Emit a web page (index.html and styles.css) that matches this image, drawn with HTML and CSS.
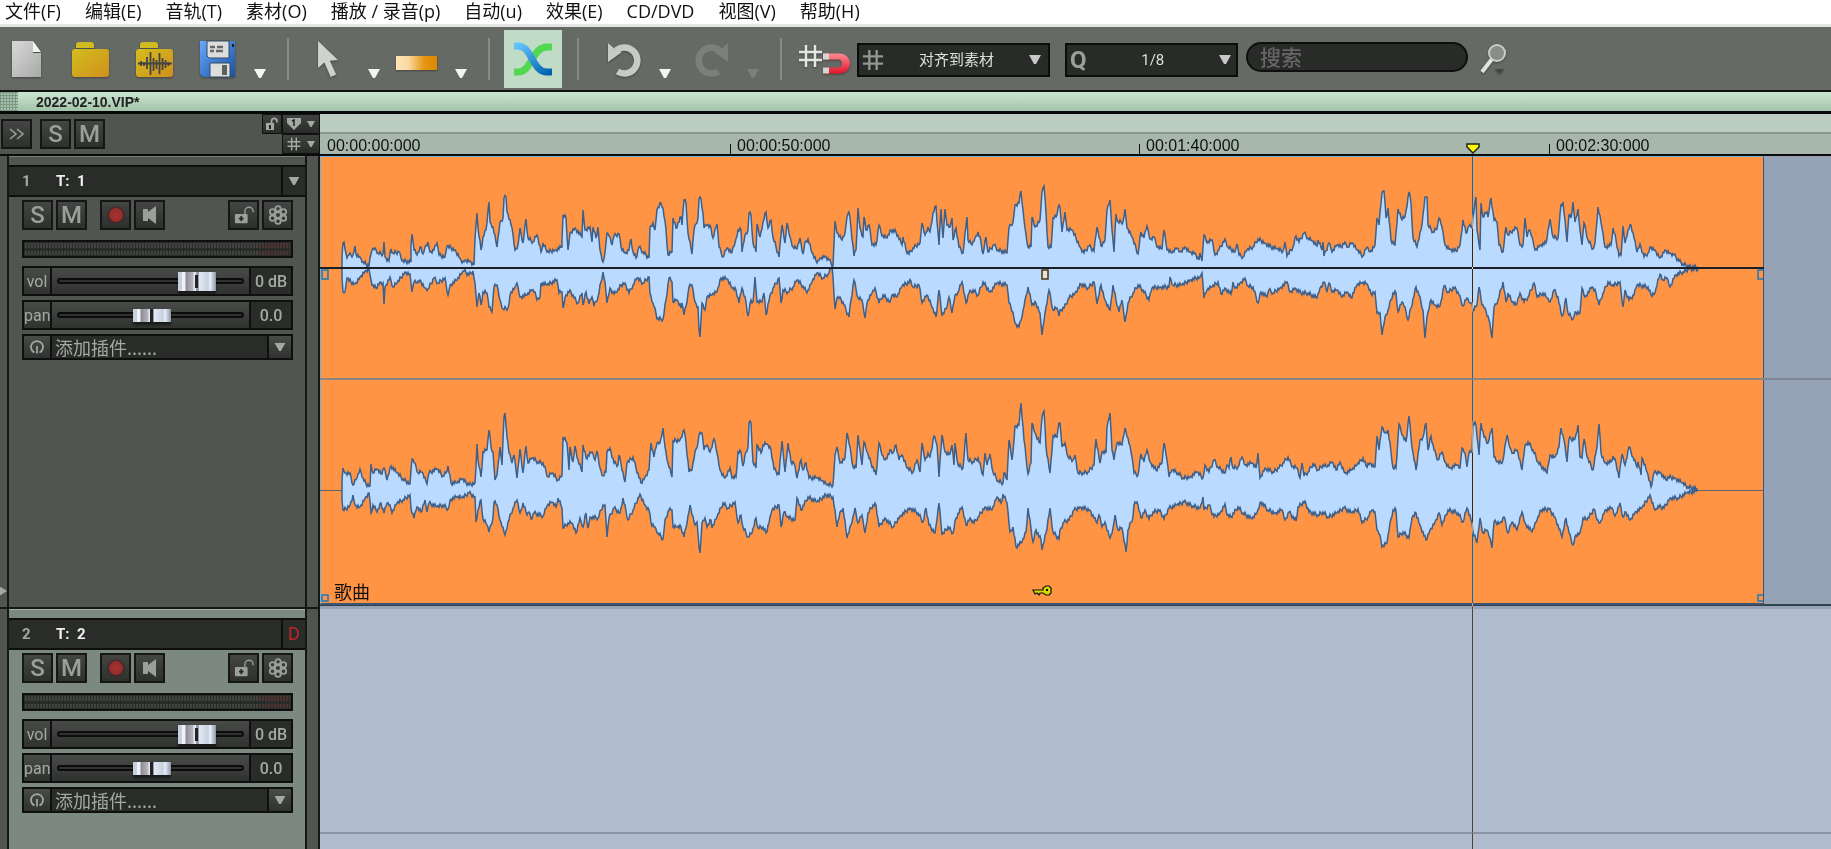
FILE: index.html
```html
<!DOCTYPE html>
<html lang="zh-CN">
<head>
    <meta charset="UTF-8">
    <meta name="viewport" content="width=device-width, initial-scale=1.0">
    <title>2022-02-10.VIP*</title>
    <link rel="stylesheet" href="styles.css">
</head>
<body>
    <!-- shared symbols -->
    <svg class="symbols" aria-hidden="true">
        <defs>
            <linearGradient id="gPage" x1="0" y1="0" x2="1" y2="1"><stop offset="0" stop-color="#d8d8d8"/><stop offset="1" stop-color="#a9a9a9"/></linearGradient>
            <linearGradient id="gFolder" x1="0" y1="0" x2="1" y2="1"><stop offset="0" stop-color="#d2be1e"/><stop offset="1" stop-color="#d18f1d"/></linearGradient>
            <linearGradient id="gDisk" x1="0" y1="0" x2="1" y2="1"><stop offset="0" stop-color="#66a9ff"/><stop offset="1" stop-color="#1a50a0"/></linearGradient>
            <linearGradient id="gBar" x1="0" y1="0" x2="1" y2="0"><stop offset="0" stop-color="#ffe4b5"/><stop offset=".3" stop-color="#fbd8a0"/><stop offset=".7" stop-color="#e59510"/><stop offset="1" stop-color="#dd8800"/></linearGradient>
            <linearGradient id="gBlue" x1="0" y1="0" x2="1" y2="1"><stop offset="0" stop-color="#66c6ff"/><stop offset="1" stop-color="#0062ae"/></linearGradient>
            <linearGradient id="gRed" x1="0" y1="0" x2="0" y2="1"><stop offset="0" stop-color="#ff8a92"/><stop offset="1" stop-color="#e3152b"/></linearGradient>
            <symbol id="lock" viewBox="0 0 22 20">
                <rect x="1" y="9" width="14" height="10" rx="1" fill="currentColor"/>
                <path d="M12 9V6a4.500 4.500 0 0 1 9 0v1" fill="none" stroke="currentColor" stroke-width="1.500"/>
                <path d="M8 11v6M5.500 14h5" stroke="#222" stroke-width="1.800"/>
            </symbol>
            <symbol id="lock-small" viewBox="0 0 14 14">
                <rect x="1" y="6" width="8" height="7" fill="currentColor"/>
                <path d="M6.500 6V4a2.700 2.700 0 0 1 5.400 0v1.500" fill="none" stroke="currentColor" stroke-width="1.800"/>
                <path d="M5 8v4" stroke="#222" stroke-width="2"/>
            </symbol>
            <symbol id="speaker" viewBox="0 0 14 18">
                <path d="M0 3h5v12H0zM5 6l8-6v18l-8-6z" fill="currentColor"/>
            </symbol>
            <symbol id="flower" viewBox="0 0 20 20">
                <g fill="none" stroke="currentColor" stroke-width="1.800">
                    <circle cx="10" cy="10" r="3"/><circle cx="10" cy="3.800" r="2.700"/><circle cx="10" cy="16.200" r="2.700"/>
                    <circle cx="4.500" cy="6.800" r="2.700"/><circle cx="15.500" cy="6.800" r="2.700"/><circle cx="4.500" cy="13.200" r="2.700"/><circle cx="15.500" cy="13.200" r="2.700"/>
                </g>
            </symbol>
            <symbol id="power" viewBox="0 0 16 16">
                <path d="M5.500 13.500A6 6 0 1 1 10.500 13.500M8 7v7.500" fill="none" stroke="currentColor" stroke-width="1.700"/>
            </symbol>
            <symbol id="hash" viewBox="0 0 24 24">
                <path d="M8 1v22M16 1v22M1 8h22M1 16h22" fill="none" stroke="currentColor" stroke-width="2.500"/>
            </symbol>
            <symbol id="down" viewBox="0 0 12 9"><path d="M0 0h12L7 9H5z" fill="currentColor"/></symbol>
            <symbol id="folder" viewBox="0 0 38 38">
                <path d="M4 8V5q0-3 3-3h12q3 0 3 3v3z" fill="#cdbb20"/>
                <rect x="0" y="9" width="37" height="28" rx="3" fill="url(#gFolder)"/>
            </symbol>
            <symbol id="undo" viewBox="0 0 38 38">
                <path d="M11 10.500A13 13 0 1 1 12.500 31.500" fill="none" stroke="currentColor" stroke-width="6.500"/>
                <path d="M3 3v19l14-10-6-2z" fill="currentColor"/>
            </symbol>
        </defs>
    </svg>

    <nav class="menu">
        <a href="#">文件(F)</a>
        <a href="#">编辑(E)</a>
        <a href="#">音轨(T)</a>
        <a href="#">素材(O)</a>
        <a href="#">播放 / 录音(p)</a>
        <a href="#">自动(u)</a>
        <a href="#">效果(E)</a>
        <a href="#">CD/DVD</a>
        <a href="#">视图(V)</a>
        <a href="#">帮助(H)</a>
    </nav>

    <div class="toolbar">
        <div class="files">
            <button class="tool" aria-label="新建">
                <svg viewBox="0 0 38 38"><path d="M4 1h21v12h8v24H4z" fill="url(#gPage)"/><path d="M25 1l8 11h-8z" fill="#f4f4f4"/></svg>
            </button>
            <button class="tool" aria-label="打开"><svg><use href="#folder"/></svg></button>
            <button class="tool" aria-label="导入音频">
                <svg viewBox="0 0 38 38"><use href="#folder"/><path d="M2 23.500h34M5 21v5M8 22v4M11 17v12M14.500 12v23M17.500 18v13M20.500 20v9M23.500 13v21M26.500 18v12M29.500 20v8M32.500 22v4" stroke="#444" stroke-width="1.800"/></svg>
            </button>
            <button class="tool" aria-label="保存">
                <svg viewBox="0 0 38 38">
                    <path d="M0 1h35v36H3l-3-3z" fill="url(#gDisk)"/>
                    <path d="M7 1h22v17H9l-2-2z" fill="#ddd" stroke="#334a66"/>
                    <path d="M10 7h5M17 7h6M10 11h4M16 11h7" stroke="#666" stroke-width="2.500"/>
                    <path d="M10 37V23h20v14z" fill="#ddd" stroke="#334a66"/>
                    <path d="M22 25h5v10h-5z" fill="#596457"/><path d="M33 4v3" stroke="#123" stroke-width="2"/>
                </svg>
            </button>
        </div>
        <button class="drop" aria-label="保存选项"><svg><use href="#down"/></svg></button>
        <span class="sep"></span>
        <button class="tool" aria-label="鼠标模式">
            <svg viewBox="0 0 38 42"><path d="M8 1v30l7-6 7 16 6-3-7-15 9-1z" fill="#d0d2cf"/></svg>
        </button>
        <button class="drop wide" aria-label="鼠标模式选项"><svg><use href="#down"/></svg></button>
        <button class="tool color" aria-label="颜色">
            <svg viewBox="0 0 42 15"><path d="M0 0h41v14H0z" fill="url(#gBar)"/></svg>
        </button>
        <button class="drop" aria-label="颜色选项"><svg><use href="#down"/></svg></button>
        <span class="sep"></span>
        <button class="tool crossfade" aria-label="自动交叉淡化">
            <svg viewBox="0 0 40 34"><path d="M1 30h4c14 0 14-25 29-25h5" fill="none" stroke="#50d850" stroke-width="7"/><path d="M1 4h4c14 0 14 26 29 26h5" fill="none" stroke="url(#gBlue)" stroke-width="7"/></svg>
        </button>
        <span class="sep"></span>
        <div class="history">
            <div class="step">
                <button class="tool" aria-label="撤销"><svg><use href="#undo"/></svg></button>
                <button class="drop" aria-label="撤销历史"><svg><use href="#down"/></svg></button>
            </div>
            <div class="step off">
                <button class="tool redo" aria-label="重做"><svg><use href="#undo"/></svg></button>
                <button class="drop" aria-label="重做历史"><svg><use href="#down"/></svg></button>
            </div>
        </div>
        <span class="sep"></span>
        <button class="tool snap" aria-label="对齐">
            <svg viewBox="0 0 54 32">
                <path d="M8 2v22M17 2v22M1 9h23M1 17h23" stroke="#e4e6e3" stroke-width="2.500"/>
                <path d="M25 10.500h17a10 10 0 0 1 0 20H25v-6h15a4 4 0 0 0 0-8H25z" fill="url(#gRed)"/>
                <path d="M25 10.500h6v6h-6zM25 24.500h6v6h-6z" fill="#d4d4d4"/>
            </svg>
        </button>
        <label class="combo snap-mode">
            <svg class="icon"><use href="#hash"/></svg>
            <select aria-label="对齐方式"><option>对齐到素材</option></select>
            <svg class="arrow"><use href="#down"/></svg>
        </label>
        <label class="combo quantize">
            <b>Q</b>
            <select aria-label="量化"><option>1/8</option></select>
            <svg class="arrow"><use href="#down"/></svg>
        </label>
        <input class="search" type="search" placeholder="搜索" aria-label="搜索">
        <button class="tool find" aria-label="查找">
            <svg viewBox="0 0 30 32"><path d="M3 29l10-13" stroke="#e2e2e2" stroke-width="4"/><circle cx="18" cy="10" r="8" fill="#888d87" stroke="#ccc" stroke-width="2"/><path d="M16 26h9l-4.500 5z" fill="#444"/></svg>
        </button>
    </div>

    <div class="tab"><span class="grip"></span><span>2022-02-10.VIP*</span></div>

    <div class="head">
        <div class="master">
            <button class="key expand" aria-label="展开">
                <svg viewBox="0 0 20 20"><path d="M3 5l6 5-6 5M10 5l6 5-6 5" fill="none" stroke="currentColor" stroke-width="1.600"/></svg>
            </button>
            <button class="key">S</button>
            <button class="key">M</button>
            <div class="minis">
                <button class="mini lock" aria-label="锁定"><svg><use href="#lock-small"/></svg></button>
                <button class="mini" aria-label="标记">
                    <svg viewBox="0 0 14 12"><path d="M0 0h14v5l-7 7-7-7z" fill="currentColor"/><path d="M5 3l2-1v6" fill="none" stroke="#222" stroke-width="1.500"/></svg>
                    <svg class="tiny"><use href="#down"/></svg>
                </button>
                <button class="mini" aria-label="网格"><svg><use href="#hash"/></svg><svg class="tiny"><use href="#down"/></svg></button>
            </div>
        </div>
        <div class="ruler">
            <span class="tick t0">00:00:00:000</span>
            <span class="tick t1">00:00:50:000</span>
            <span class="tick t2">00:01:40:000</span>
            <span class="tick t3">00:02:30:000</span>
            <svg class="cursor" viewBox="0 0 14 11"><path d="M1 1h12v3L7 10 1 4z" fill="#ff0" stroke="#222" stroke-width="1.500"/></svg>
        </div>
    </div>

    <main class="tracks">
        <section class="track first">
            <div class="gutter"><svg viewBox="0 0 8 10"><path d="M0 0l8 5-8 5z" fill="#a3aaa3"/></svg></div>
            <div class="panel">
                <div class="title">
                    <span class="num">1</span>
                    <input type="text" value="T:  1" aria-label="音轨名称">
                    <button aria-label="音轨菜单"><svg class="tri"><use href="#down"/></svg></button>
                </div>
                <div class="controls">
                    <div class="keys">
                        <button class="key">S</button>
                        <button class="key">M</button>
                        <button class="key rec" aria-label="录音"><i></i></button>
                        <button class="key" aria-label="监听"><svg class="spk"><use href="#speaker"/></svg></button>
                        <button class="key right" aria-label="锁定"><svg><use href="#lock"/></svg></button>
                        <button class="key" aria-label="冻结"><svg><use href="#flower"/></svg></button>
                    </div>
                    <div class="meter"><i></i><i></i></div>
                    <div class="fader">
                        <label for="vol1">vol</label>
                        <div class="rail"><input id="vol1" type="range" min="0" max="100" value="82"></div>
                        <output for="vol1">0 dB</output>
                    </div>
                    <div class="fader pan">
                        <label for="pan1">pan</label>
                        <div class="rail"><input id="pan1" type="range" min="0" max="100" value="51"></div>
                        <output for="pan1">0.0</output>
                    </div>
                    <div class="plugin">
                        <button aria-label="启用插件"><svg><use href="#power"/></svg></button>
                        <select aria-label="插件"><option>添加插件......</option></select>
                        <svg class="tri"><use href="#down"/></svg>
                    </div>
                </div>
            </div>
            <div class="edge"></div>
            <div class="lane">
                <div class="clip">
                    <svg class="wave" id="wave" width="1444" height="448" viewBox="0 0 1444 448">
                        <path d="M0 334.500h1444" stroke="#5b6470" stroke-width="1"/>
                        <polygon id="left"/>
                        <polygon id="right"/>
                        <path d="M0 112h1444" stroke="#1c2026" stroke-width="2"/>
                        <path d="M0 223h1444" stroke="#8c8582" stroke-width="2"/>
                        <g fill="none" stroke="#187bc0" stroke-width="1.500">
                            <path d="M2 114h6v9H2zM2 439h6v6H2zM1443 114h-5v9h5M1443 439h-5v6h5"/>
                        </g>
                        <path d="M722 114h6v9h-6z" fill="#e8e4d0" stroke="#4a3518" stroke-width="1.500"/>
                        <g stroke="#111" stroke-width="1.200" fill="#d8d800"><path d="M713 434h10v-2l3-2h3l2 2v5l-2 2h-3l-3-2h-3l-1 2-2-2-2 1z"/><path d="M726 434h2" stroke-width="2"/></g>
                    </svg>
                    <span class="name">歌曲</span>
                </div>
            </div>
        </section>

        <section class="track selected">
            <div class="gutter"></div>
            <div class="panel">
                <div class="title">
                    <span class="num">2</span>
                    <input type="text" value="T:  2" aria-label="音轨名称">
                    <button class="d">D</button>
                </div>
                <div class="controls">
                    <div class="keys">
                        <button class="key">S</button>
                        <button class="key">M</button>
                        <button class="key rec" aria-label="录音"><i></i></button>
                        <button class="key" aria-label="监听"><svg class="spk"><use href="#speaker"/></svg></button>
                        <button class="key right" aria-label="锁定"><svg><use href="#lock"/></svg></button>
                        <button class="key" aria-label="冻结"><svg><use href="#flower"/></svg></button>
                    </div>
                    <div class="meter"><i></i><i></i></div>
                    <div class="fader">
                        <label for="vol2">vol</label>
                        <div class="rail"><input id="vol2" type="range" min="0" max="100" value="82"></div>
                        <output for="vol2">0 dB</output>
                    </div>
                    <div class="fader pan">
                        <label for="pan2">pan</label>
                        <div class="rail"><input id="pan2" type="range" min="0" max="100" value="51"></div>
                        <output for="pan2">0.0</output>
                    </div>
                    <div class="plugin">
                        <button aria-label="启用插件"><svg><use href="#power"/></svg></button>
                        <select aria-label="插件"><option>添加插件......</option></select>
                        <svg class="tri"><use href="#down"/></svg>
                    </div>
                </div>
            </div>
            <div class="edge"></div>
            <div class="lane"></div>
        </section>
        <div class="playhead"></div>
    </main>

    <script src="wave.js"></script>
</body>
</html>
```
FILE: styles.css
```css
* {
    box-sizing: border-box;
}

body {
    margin: 0;
    height: 100vh;
    display: flex;
    flex-direction: column;
    overflow: hidden;
    background: #505550;
    color: #a3aaa3;
    font-family: Roboto, "Noto Sans CJK SC", sans-serif;
}

button, input, select {
    margin: 0;
    padding: 0;
    border: 0;
    border-radius: 0;
    background: none;
    color: inherit;
    font: inherit;
}

select, input {
    appearance: none;
    outline: 0;
    min-width: 0;
}

svg {
    display: block;
}

.symbols {
    position: absolute;
    width: 0;
    height: 0;
}

/* menu */
.menu {
    flex: none;
    display: flex;
    gap: 24px;
    height: 27px;
    padding-left: 5px;
    background: #fff;
    border-bottom: 3px solid #e6e6e6;
    font: 18px/22px "Open Sans", "Noto Sans CJK SC", sans-serif;
    white-space: nowrap;
}

.menu a {
    color: #111;
    text-decoration: none;
}

/* toolbar */
.toolbar {
    flex: none;
    display: flex;
    align-items: center;
    height: 65px;
    padding-left: 8px;
    background: #656a64;
    border-bottom: 2px solid #111;
}

.files {
    display: flex;
    gap: 26px;
}

.tool svg {
    width: 38px;
    height: 38px;
    filter: drop-shadow(0 1px 1px #444);
}

.drop {
    align-self: flex-end;
    margin: 0 0 12px 16px;
    color: #f4f4f4;
}

.drop.wide {
    margin-left: 21px;
}

.drop svg {
    width: 12px;
    height: 9px;
}

.sep {
    width: 2px;
    height: 42px;
    margin: 0 20px 0 21px;
    background: #888c87;
}

.color {
    margin: 10px 1px 0 16px;
}

.color svg {
    width: 42px;
    height: 15px;
}

.crossfade {
    width: 58px;
    height: 58px;
    margin: 0 -6px;
    padding: 0 9px;
    background: #c0dcc6;
}

.crossfade svg {
    width: 40px;
    height: 34px;
    filter: none;
}

.history {
    display: flex;
    gap: 22px;
    padding-left: 6px;
    color: #c8cac7;
}

.step {
    display: flex;
}

.step .drop {
    margin-bottom: 0;
}

.step.off,
.off .drop {
    color: #7b807a;
}

.off svg {
    filter: none;
}

.redo {
    transform: scaleX(-1);
}

.snap {
    margin-left: -4px;
}

.snap svg {
    width: 54px;
    height: 32px;
}

.combo {
    display: flex;
    align-items: center;
    height: 34px;
    padding: 0 7px;
    margin: 2px 0 0 5px;
    background: #292b28;
    border: 2px solid #0c0c0c;
    color: #d7e2d9;
    font-size: 15px;
}

.combo select {
    flex: 1;
    text-align: center;
    text-align-last: center;
}

.combo .icon {
    width: 22px;
    height: 24px;
    color: #929892;
}

.combo b {
    color: #99a099;
    font-size: 24px;
    font-weight: 700;
}

.combo .arrow {
    width: 12px;
    height: 9px;
    color: #c8c8c8;
}

.snap-mode {
    width: 193px;
    padding-left: 3px;
}

.quantize {
    width: 173px;
    margin-left: 15px;
    padding: 0 5px 0 3px;
}

.search {
    width: 222px;
    height: 30px;
    margin: 0 11px 4px 8px;
    padding: 2px 12px 0;
    border: 2px solid #0e0f0e;
    border-radius: 15px;
    background: #292b28;
    font-size: 21px;
    font-weight: 500;
}

.search::placeholder {
    color: #666;
}

.find svg {
    width: 30px;
    height: 32px;
}

/* project tab */
.tab {
    flex: none;
    display: flex;
    align-items: center;
    gap: 18px;
    height: 22px;
    border-bottom: 3px solid #080808;
    background: linear-gradient(#cbe5d1, #a3c3aa);
    color: #222;
    font: bold 14px/18px "Liberation Sans", sans-serif;
}

.grip {
    width: 18px;
    height: 100%;
    background: repeating-linear-gradient(90deg, #7d9683 0 1px, transparent 1px 3px), repeating-linear-gradient(#7d9683 0 1px, #a3c3aa 1px 3px);
}

/* master row and ruler */
.head {
    flex: none;
    display: grid;
    grid-template-columns: 320px 1fr;
    height: 42px;
    border-bottom: 2px solid #0b0b0b;
}

.master {
    display: flex;
    align-items: center;
    gap: 3px;
    padding-left: 1px;
}

.key {
    display: grid;
    place-items: center;
    width: 31px;
    height: 30px;
    border: 2px solid #151615;
    background: linear-gradient(#434643, #2e302e);
    color: #99a099;
    font-size: 24px;
    font-weight: 500;
    line-height: 26px;
}

.key svg {
    width: 20px;
    height: 20px;
}

.key .spk {
    width: 14px;
    height: 18px;
}

.expand {
    margin-right: 5px;
}

.minis {
    display: grid;
    grid-template: 20px 20px / 20px 38px;
    margin-left: auto;
}

.mini {
    display: flex;
    align-items: center;
    justify-content: center;
    gap: 6px;
    grid-column: 2;
    border: 1px solid #111;
    background: linear-gradient(#3f423f, #2a2c2a);
    color: #a3aaa3;
}

.mini.lock {
    grid-column: 1;
}

.mini svg {
    width: 14px;
    height: 14px;
}

.mini .tiny {
    width: 8px;
    height: 6px;
}

.ruler {
    position: relative;
    background: linear-gradient(#bbcdc1 18px, #8a978c 18px 20px, #a7b7ab 20px);
}

.tick {
    position: absolute;
    bottom: 0;
    padding-left: 7px;
    color: #111;
    font: 16px/16px "Liberation Sans", sans-serif;
}

.tick::before {
    content: "";
    position: absolute;
    left: 0;
    bottom: 0;
    width: 1px;
    height: 10px;
    background: #111;
}

.t0 { left: 0; }
.t1 { left: 410px; }
.t2 { left: 819px; }
.t3 { left: 1229px; }

.t0::before {
    display: none;
}

.cursor {
    position: absolute;
    left: 1146px;
    bottom: 0;
    width: 14px;
    height: 11px;
}

/* tracks */
.tracks {
    position: relative;
    flex: 1;
    display: flex;
    flex-direction: column;
    min-height: 0;
}

.track {
    flex: 1;
    display: grid;
    grid-template-columns: 9px 296px 15px 1fr;
}

.track.first {
    flex: none;
    height: 453px;
}

.gutter {
    border-right: 2px solid #151615;
    border-bottom: 2px solid #151615;
    display: flex;
    align-items: flex-end;
}

.gutter svg {
    width: 8px;
    height: 10px;
    margin-bottom: 11px;
}

.panel {
    padding-top: 9px;
    border-bottom: 2px solid #151615;
    box-shadow: inset 0 1px #7a7f79;
}

.selected .panel {
    background: #7c8980;
    box-shadow: inset 0 1px #a2b0a5;
}

.edge {
    border: solid #151615;
    border-width: 0 2px 2px;
}

.selected .gutter,
.selected .panel,
.selected .edge {
    border-bottom: 0;
}

.title {
    display: flex;
    height: 32px;
    border: solid #0e0f0e;
    border-width: 2px 0;
    background: #2a2c29;
}

.num {
    width: 47px;
    padding-left: 13px;
    font-weight: 700;
    font-size: 15px;
    line-height: 28px;
}

.title input {
    flex: 1;
    color: #f0f0f0;
    font-size: 15px;
    font-weight: 700;
    white-space: pre;
}

.title button {
    display: grid;
    place-items: center;
    width: 24px;
    border-left: 2px solid #0e0f0e;
}

.title .d {
    color: #c0242a;
    font-size: 18px;
    line-height: 28px;
}

.tri {
    width: 12px;
    height: 8px;
}

.controls {
    padding: 3px 12px 0 13px;
}

.keys {
    display: flex;
    gap: 3px;
}

.rec {
    margin-left: 10px;
}

.rec i {
    width: 14px;
    height: 14px;
    border-radius: 50%;
    background: radial-gradient(#a83230, #8c2a2a);
    box-shadow: 0 0 2px 1px #482020;
}

.right {
    margin-left: auto;
}

.meter {
    display: grid;
    gap: 3px;
    height: 18px;
    margin: 10px 0 8px;
    padding: 1px;
    border: 2px solid #0e0f0e;
    background: #2a2c2a;
}

.meter i {
    background:
        repeating-linear-gradient(90deg, transparent 0 2px, #2a2c2a 2px 3px),
        linear-gradient(90deg, #404340 88%, #4d3432 88%);
}

.fader {
    display: flex;
    height: 30px;
    margin-bottom: 4px;
    border: 2px solid #0e0f0e;
    background: #2a2c29;
    font-size: 16px;
    font-weight: 500;
    line-height: 28px;
}

.fader label {
    width: 28px;
    background: linear-gradient(#484b48, #303230);
    border-right: 2px solid #0e0f0e;
    text-align: center;
    font-weight: 400;
}

.rail {
    flex: 1;
    display: flex;
    align-items: center;
    padding: 0 5px;
    background: linear-gradient(#484b48, #303230);
}

.rail input {
    width: 100%;
    height: 6px;
    border: 2px solid #0c0c0c;
    border-radius: 3px;
    background: #303230;
}

.rail input::-webkit-slider-thumb {
    appearance: none;
    width: 38px;
    height: 19px;
    background:
        linear-gradient(#222, #222) 50% 50% / 3px 13px no-repeat,
        linear-gradient(90deg, #c9cfdc 0 4px, #eef1fa 4px 7px, #8f8a94 8px, #b9b6c0 15px, #e5e9f4 16px 18px, #99a 18px 21px, #e5eaf4 21px, #c5d1df 30px, #e8eefa 32px, #8d95a5 38px);
    box-shadow: 0 3px 2px rgba(0, 0, 0, 0.5);
}

.pan input::-webkit-slider-thumb {
    height: 13px;
}

.fader output {
    width: 42px;
    border-left: 2px solid #0e0f0e;
    text-align: center;
    white-space: nowrap;
}

.plugin {
    display: flex;
    align-items: center;
    position: relative;
    height: 26px;
    border: 2px solid #0e0f0e;
    background: #2a2c29;
}

.plugin button {
    display: grid;
    place-items: center;
    width: 28px;
    height: 22px;
    border-right: 2px solid #0e0f0e;
    background: linear-gradient(#484b48, #303230);
}

.plugin button svg {
    width: 16px;
    height: 16px;
}

.plugin select {
    flex: 1;
    height: 22px;
    padding-left: 3px;
    font: 18px/20px "Noto Sans CJK SC", sans-serif;
}

.plugin > svg {
    width: 24px;
    height: 22px;
    padding: 7px 5px;
    border-left: 2px solid #0e0f0e;
    background: linear-gradient(#484b48, #303230);
}

/* arrangement */
.lane {
    position: relative;
    overflow: hidden;
    background: linear-gradient(#96a3b7 222px, #7f8896 222px 224px, #96a3b7 224px 448px, #34414f 448px 450px, #96a3b7 450px);
}

.selected .lane {
    background: linear-gradient(#b0bbce 223px, #8b94a3 223px 225px, #b0bbce 225px);
}

.clip {
    position: relative;
    width: 1444px;
    height: 449px;
    border: solid #70b3dd;
    border-width: 1px 1px 2px;
    border-right-color: #3a5575;
    border-bottom-color: #3a5575;
    background: #ff9445;
}

.wave {
    margin: -1px;
}

.wave polygon {
    fill: #bbdaff;
    stroke: #3c608c;
    stroke-width: 1.5px;
}

.name {
    position: absolute;
    left: 13px;
    bottom: 0;
    color: #111;
    font: 18px/24px "Noto Sans CJK SC", sans-serif;
}

.playhead {
    position: absolute;
    left: 1472px;
    top: 0;
    bottom: 0;
    width: 1px;
    background: #fff;
    mix-blend-mode: difference;
}
```
FILE: wave.js
```js
// Peak data per channel, stored in blocks. Each block has its own origin
// and the pairs are in thirds of a pixel (x from the block start, y from the top).
const blocks = [-10, 380, 740, 1100];

const leftTop = [
    '95,350 95,318 98,280 103,275 106,298 112,325 118,314 128,316 135,288 139,312 150,320 160,335 178,348 181,325 186,300 194,293 205,308 218,312 221,275 226,320 236,332 244,298 250,308 266,307 276,333 302,335 303,285 307,252 311,300 320,316 334,292 338,312 346,290 355,275 361,305 372,300 382,280 387,316 405,320 412,288 436,300 450,325 456,340 466,330 480,332 492,345 495,265 500,190 505,235 512,300 518,260 528,240 536,157 541,215 550,230 562,290 570,215 578,205 583,145 588,140 592,185 605,235 615,300 625,285 630,235 638,280 648,208 653,265 668,275 680,255 692,305 698,278 710,305 735,300 755,290 757,270 760,195 767,205 773,300 780,250 796,235 815,260 820,180 826,240 840,230 845,275 850,232 857,265 863,230 870,300 878,335 886,310 890,250 898,258 905,285 912,258 928,252 934,290 944,310 956,300 963,266 970,305 978,325 986,292 1000,305 1017,325 1020,230 1028,220 1034,240 1042,180 1053,158 1060,175 1068,240 1075,315 1085,305 1090,205 1097,235 1112,200 1117,225 1121,150 1127,160 1135,250 1147,312 1152,240 1165,205 1168,147',
    '2,147 8,190 12,235 22,225 32,235 38,265 50,222 58,290 68,322 80,295 92,310 105,280 115,240 122,240 127,305 135,255 143,240 148,190 154,195 160,280 167,305 172,222 180,260 188,215 199,185 205,235 213,210 220,260 238,320 245,225 256,280 262,218 270,260 280,290 292,298 300,265 308,312 315,275 325,268 335,310 350,340 360,325 375,317 388,330 398,348 402,280 405,212 412,250 425,270 435,250 440,200 446,185 453,235 462,317 468,300 473,173 480,235 488,260 491,200 498,240 507,225 515,285 528,285 538,225 545,258 560,265 572,240 588,245 605,285 610,260 618,300 627,312 640,295 660,280 666,218 674,255 685,230 690,245 700,190 707,168 712,215 718,285 724,178 730,265 735,178 741,225 750,230 756,205 760,270 768,235 778,290 790,308 800,200 805,270 815,285 825,265 835,245 843,275 850,312 857,262 865,305 882,285 895,300 920,308 928,235 938,215 946,165 958,160 964,122 969,180 975,235 985,290 992,290 997,200 1005,230 1020,210 1025,125 1031,108 1037,190 1044,290 1052,295 1058,205 1067,200 1076,165',
    '-4,165 0,172 5,245 14,185 20,240 35,240 48,265 60,290 72,308 88,288 103,303 110,230 122,288 135,270 142,180 149,150 155,240 162,305 167,192 174,215 188,215 195,178 202,235 215,260 235,312 243,245 252,265 261,228 270,268 282,260 290,290 305,298 312,240 322,300 335,308 350,295 360,305 374,290 390,305 405,310 418,330 420,310 427,332 432,255 440,280 455,270 465,315 478,300 495,268 505,290 525,305 532,282 538,315 550,322 562,300 580,290 595,268 615,280 632,290 650,298 668,302 676,275 682,318 700,290 708,258 718,275 733,250 745,265 755,272 770,288 775,270 785,300 790,275 793,318 806,280 815,305 830,285 842,290 855,275 865,290 876,278 890,300 908,318 920,292 930,307 945,285 950,205 957,225 966,130 973,122 979,205 985,175 993,270 1005,285 1013,178 1022,205 1036,200 1046,126 1052,160 1060,265 1070,290 1082,240 1088,195 1094,140 1100,140 1105,225 1118,245 1130,238 1138,205 1145,230 1155,285 1170,298 1188,302 1200,285 1210,210 1218,250 1228,228 1237,235',
    '159,200 167,142 172,240 180,300 184,160 190,200 200,185 205,200 214,145 222,210 230,215 238,285 248,307 257,230 265,255 280,240 290,235 300,285 309,285 316,205 321,260 328,240 336,260 345,300 360,285 378,280 390,208 400,260 415,265 422,165 430,155 440,275 447,195 454,205 460,155 466,215 473,178 480,240 486,285 492,220 505,270 518,298 526,280 535,172 545,235 555,290 572,285 580,235 587,270 598,318 604,315 608,228 616,280 625,240 632,225 642,265 652,305 660,282 673,320 685,310 692,290 705,300 720,325 735,300 750,308 762,315 778,332 790,342 808,350 834,352'
];

const leftBottom = [
    '95,385 100,425 105,425 112,385 122,395 135,402 150,382 165,362 176,358 181,375 186,405 197,415 210,395 218,400 221,462 226,410 240,380 248,410 262,398 285,365 300,372 304,400 307,425 312,395 322,400 330,390 345,415 355,418 372,385 385,400 405,385 415,435 420,405 440,390 455,370 462,362 478,376 490,362 495,400 500,472 506,430 513,465 520,425 532,430 536,472 545,485 552,410 562,405 570,450 580,478 594,475 602,425 614,410 622,398 630,440 650,435 665,420 676,425 680,450 690,442 692,400 710,405 740,390 748,430 757,425 760,475 768,435 780,420 792,445 803,458 815,430 820,465 828,425 838,462 845,440 853,468 863,440 872,395 878,365 886,395 892,458 900,415 912,432 920,425 932,405 945,400 958,430 968,405 980,385 1000,400 1017,380 1020,430 1028,460 1036,475 1040,507 1060,507 1068,450 1076,385 1085,395 1090,455 1102,450 1112,475 1117,460 1121,495 1130,455 1136,410 1147,405 1155,455 1165,470 1168,540',
    '0,560 5,460 15,480 22,440 35,435 52,425 62,385 80,388 95,415 108,420 118,460 127,415 137,455 145,498 152,450 158,455 166,380 170,455 185,455 193,430 199,495 210,435 222,410 238,385 243,460 250,420 265,425 280,410 292,390 308,408 322,428 335,395 350,370 368,385 385,372 395,352 400,380 405,478 412,445 420,440 432,465 446,502 454,450 463,390 473,445 485,450 494,505 502,460 515,430 525,415 536,458 550,435 570,455 575,435 590,440 605,408 632,392 640,410 658,405 667,460 680,435 695,470 707,502 716,420 725,498 740,470 748,440 756,490 765,435 775,425 785,395 798,460 808,430 820,420 835,435 850,395 870,425 890,400 920,405 928,460 938,485 946,520 958,530 966,500 975,450 984,410 995,465 1008,460 1020,490 1026,555 1034,490 1048,420 1058,480 1070,475 1076,498',
    '0,480 12,475 28,445 45,430 62,402 85,415 103,395 110,462 122,405 135,450 149,480 160,405 167,450 176,485 187,450 195,515 205,460 220,430 235,405 250,420 266,450 275,415 300,410 328,412 330,380 338,405 365,405 390,390 420,380 427,368 433,443 440,420 455,410 475,395 483,432 495,415 512,432 518,395 525,415 540,400 555,385 565,408 578,410 595,460 603,425 620,440 628,420 640,430 660,415 680,395 690,425 705,415 722,430 745,428 770,445 780,415 792,395 800,425 808,400 815,425 830,420 847,442 860,425 872,445 890,405 905,398 922,402 932,432 944,425 950,490 960,490 967,555 975,500 985,480 998,430 1008,430 1013,485 1025,455 1035,470 1045,510 1052,475 1067,410 1077,435 1088,480 1094,565 1102,500 1112,450 1125,465 1140,468 1152,408 1165,425 1185,410 1198,435 1208,468 1220,445 1230,460 1237,458',
    '159,482 170,465 178,412 185,465 195,475 207,510 216,565 222,475 235,450 248,395 258,455 265,428 275,455 288,465 300,430 312,455 325,440 342,398 352,440 370,430 380,445 390,455 402,420 415,440 422,490 430,495 438,445 445,490 458,508 465,485 480,490 486,415 495,440 515,410 527,430 537,465 550,430 565,395 575,408 600,395 608,470 615,420 628,450 642,435 652,405 685,410 692,435 705,430 715,388 722,375 730,390 740,385 750,410 765,375 790,365 808,358 834,356'
];

const rightTop = [
    '95,1020 95,990 98,955 104,968 120,970 130,1005 140,985 150,958 158,985 168,1002 180,1008 184,942 190,968 200,958 212,972 221,955 230,990 244,948 262,970 280,988 300,1002 303,960 307,928 315,940 325,970 335,965 350,1002 358,968 382,958 400,978 408,970 415,948 422,998 440,1000 455,988 478,1005 494,1000 497,950 500,883 505,930 512,980 520,905 530,900 536,840 542,890 548,905 555,990 562,975 570,890 576,945 581,800 586,788 591,860 598,910 605,940 613,915 620,985 630,898 638,970 648,888 655,940 665,925 685,935 700,938 715,980 725,970 745,990 755,978 760,860 770,880 776,960 780,890 788,935 796,888 805,930 815,965 820,885 828,925 845,905 855,930 862,902 870,955 878,978 888,965 892,905 901,895 912,940 925,945 928,915 944,995 952,940 968,922 978,955 994,1000 1005,980 1017,960 1022,878 1032,920 1042,880 1050,880 1058,835 1065,890 1075,940 1085,980 1090,872 1110,870 1121,840 1128,880 1136,965 1147,960 1155,905 1165,880 1168,855',
    '5,850 12,900 22,885 30,905 42,868 52,910 60,960 75,985 90,955 97,985 108,982 115,905 122,905 128,948 138,905 143,890 148,818 154,820 160,935 167,955 172,885 182,910 190,885 200,882 212,900 222,958 238,975 247,872 255,965 263,880 272,935 283,940 292,985 302,930 310,960 318,940 328,985 350,985 365,992 380,1005 400,1005 405,915 410,890 420,940 435,925 442,850 450,890 460,950 467,955 473,855 480,900 487,945 491,875 500,905 512,940 527,975 536,880 545,915 555,930 572,900 580,910 587,885 597,930 605,915 620,955 640,965 650,930 660,965 667,878 675,930 685,910 690,920 703,858 710,885 717,980 725,855 735,905 750,912 757,885 762,945 766,878 775,945 788,955 798,850 805,930 820,935 835,925 848,975 855,908 862,945 870,912 880,965 895,992 908,1000 912,970 920,990 928,870 935,930 940,905 946,828 957,825 964,758 972,870 985,972 992,940 995,818 1005,850 1020,880 1026,800 1031,782 1038,890 1050,970 1060,858 1070,860 1077,820',
    '0,818 5,890 14,880 25,920 38,930 45,915 55,970 70,968 85,965 103,945 109,868 120,940 127,905 137,910 142,830 149,790 155,900 162,930 170,880 185,885 195,835 205,865 215,920 222,970 235,975 243,912 252,935 261,900 270,935 288,960 305,940 312,880 320,930 327,980 335,960 355,970 370,985 390,980 410,965 428,985 435,945 447,965 463,930 475,950 495,970 500,945 508,955 514,922 520,955 535,950 545,922 555,945 575,940 588,955 595,908 600,985 615,955 640,965 658,955 670,940 684,922 695,950 710,955 720,985 725,940 732,978 745,965 760,942 775,960 788,945 800,950 815,935 828,960 840,935 855,968 875,960 890,945 908,925 918,948 930,938 944,950 950,858 957,900 966,832 975,850 985,840 992,905 1000,955 1008,955 1016,822 1025,855 1038,875 1048,798 1055,895 1068,960 1080,870 1088,862 1097,818 1105,900 1112,858 1122,900 1135,930 1145,905 1155,935 1170,955 1190,945 1200,955 1207,895 1215,910 1220,950 1228,908 1237,905',
    '159,820 167,825 176,915 184,820 192,860 205,880 215,835 222,920 232,935 242,940 250,930 260,855 270,895 280,910 290,900 306,960 315,885 325,875 340,900 355,935 380,970 390,915 405,920 418,890 424,835 432,870 440,935 448,868 466,868 473,825 480,920 486,925 492,868 500,920 520,960 530,890 536,822 543,910 555,940 572,935 580,918 588,940 598,985 607,912 616,945 628,890 640,920 650,950 655,935 662,975 667,925 680,965 693,1010 702,970 720,965 738,990 745,980 765,985 785,1000 805,1012 830,1018'
];

const rightBottom = [
    '95,1050 98,1080 108,1078 120,1065 130,1035 135,1065 150,1072 165,1045 178,1028 184,1090 190,1065 200,1085 213,1060 222,1090 232,1060 240,1065 247,1090 260,1058 280,1050 300,1035 304,1075 311,1105 320,1070 332,1085 345,1050 350,1085 358,1058 380,1070 398,1065 415,1078 422,1048 440,1042 455,1045 478,1030 494,1040 499,1115 505,1080 512,1050 518,1108 530,1125 537,1145 548,1105 553,1055 562,1065 570,1110 580,1130 586,1155 595,1115 608,1075 622,1050 630,1090 640,1060 650,1095 658,1085 662,1108 672,1090 700,1098 712,1068 725,1055 738,1070 745,1045 757,1075 760,1135 775,1120 785,1120 797,1150 810,1105 820,1130 828,1090 833,1135 840,1100 865,1105 878,1065 886,1065 891,1160 898,1105 912,1075 930,1090 940,1045 954,1110 968,1080 990,1032 1005,1065 1018,1080 1022,1118 1035,1130 1045,1150 1058,1168 1065,1110 1078,1080 1085,1080 1090,1130 1102,1130 1112,1130 1121,1160 1132,1120 1140,1065 1155,1125 1162,1115 1168,1190',
    '0,1210 5,1120 15,1105 22,1130 32,1110 35,1135 50,1100 70,1060 85,1075 105,1055 115,1120 123,1095 130,1130 145,1160 155,1150 167,1105 175,1135 188,1130 198,1150 208,1120 215,1080 238,1065 244,1130 252,1085 262,1100 285,1110 292,1045 302,1080 325,1040 350,1055 378,1035 400,1040 410,1130 420,1085 430,1075 442,1165 455,1115 464,1075 475,1120 485,1095 494,1150 505,1090 518,1065 528,1065 537,1130 555,1105 578,1130 600,1098 630,1075 655,1090 668,1115 678,1075 688,1125 706,1150 717,1060 726,1155 745,1130 758,1150 768,1105 785,1070 798,1125 810,1105 823,1120 835,1100 855,1070 875,1080 892,1042 903,1060 908,1032 920,1060 930,1145 938,1130 948,1190 965,1175 978,1145 985,1075 998,1175 1008,1140 1022,1170 1027,1200 1038,1150 1050,1075 1060,1145 1078,1168',
    '0,1140 12,1115 28,1110 42,1080 60,1070 90,1080 103,1105 112,1120 118,1095 125,1130 135,1115 149,1165 158,1135 165,1095 175,1140 187,1135 198,1205 205,1140 218,1100 222,1065 230,1055 243,1105 255,1080 266,1108 280,1085 300,1080 313,1108 328,1075 350,1065 372,1055 400,1068 420,1075 428,1042 432,1080 447,1065 463,1100 480,1090 495,1062 500,1095 514,1102 535,1070 550,1090 576,1108 590,1090 602,1055 625,1080 645,1090 665,1080 676,1110 688,1085 708,1112 715,1070 735,1052 748,1085 775,1095 790,1085 805,1100 830,1090 852,1075 875,1090 893,1078 907,1120 925,1100 937,1080 945,1085 950,1140 960,1155 967,1190 980,1180 990,1120 998,1080 1008,1080 1014,1160 1030,1145 1048,1165 1056,1105 1067,1090 1080,1125 1097,1170 1110,1140 1125,1115 1137,1090 1145,1125 1165,1080 1195,1090 1210,1115 1220,1075 1237,1120',
    '159,1145 172,1180 180,1105 188,1150 200,1140 210,1165 217,1195 223,1115 240,1120 252,1100 265,1150 275,1115 292,1140 306,1085 315,1120 335,1145 350,1110 362,1080 388,1078 405,1100 425,1160 438,1105 448,1150 460,1185 468,1155 480,1150 488,1105 500,1110 522,1078 530,1110 540,1120 555,1080 575,1075 585,1098 600,1058 608,1100 618,1085 630,1110 645,1085 665,1075 690,1035 705,1080 715,1068 732,1075 750,1045 775,1045 800,1030 830,1022'
];

function toPoints(channel) {
    const points = [];
    channel.forEach((line, i) => {
        line.split(' ').forEach(pair => {
            const [x, y] = pair.split(',').map(Number);
            points.push([Math.round(blocks[i] + x / 3), Math.round(y / 3) - 6]);
        });
    });
    return points;
}

// one value per pixel column, with a little grain between the stored peaks
function fill(points, amount) {
    const out = [];
    for (let i = 0; i < points.length - 1; i++) {
        const [x1, y1] = points[i];
        const [x2, y2] = points[i + 1];
        out.push([x1, y1]);
        for (let x = x1 + 1; x < x2; x++) {
            const grain = (x * 7 % 5 - 2) * amount;
            out.push([x, y1 + (y2 - y1) * (x - x1) / (x2 - x1) + grain]);
        }
    }
    out.push(points[points.length - 1]);
    return out;
}

function draw(id, top, bottom) {
    const outline = fill(toPoints(top), 1).concat(fill(toPoints(bottom), 1).reverse());
    document.getElementById(id).setAttribute('points', outline.map(p => p.join(',')).join(' '));
}

draw('left', leftTop, leftBottom);
draw('right', rightTop, rightBottom);
```
